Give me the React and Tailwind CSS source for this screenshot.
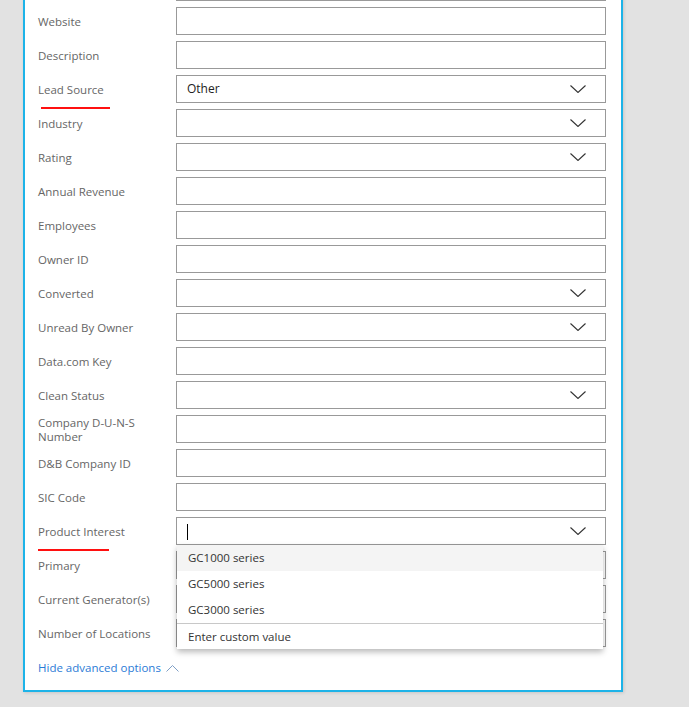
import { useState } from "react";

// fields in the advanced section of the lead form (first one is scrolled past the top)
const fields = [
  { id: "prev", label: "" },
  { id: "web", label: "Website" },
  { id: "desc", label: "Description" },
  { id: "src", label: "Lead Source", select: true, value: "Other", mark: "left-[3px] w-[69px]" },
  { id: "ind", label: "Industry", select: true },
  { id: "rat", label: "Rating", select: true },
  { id: "rev", label: "Annual Revenue" },
  { id: "emp", label: "Employees" },
  { id: "own", label: "Owner ID" },
  { id: "conv", label: "Converted", select: true },
  { id: "unr", label: "Unread By Owner", select: true },
  { id: "dck", label: "Data.com Key" },
  { id: "cln", label: "Clean Status", select: true },
  { id: "duns", label: "Company D-U-N-S Number" },
  { id: "dnb", label: "D&B Company ID" },
  { id: "sic", label: "SIC Code" },
  { id: "pi", label: "Product Interest", select: true, open: true, mark: "left-0 w-[71px]" },
  { id: "pri", label: "Primary" },
  { id: "gen", label: "Current Generator(s)" },
  { id: "loc", label: "Number of Locations" },
];

const options = ["GC1000 series", "GC5000 series", "GC3000 series"];

function Chevron() {
  return (
    <svg width="16" height="8" viewBox="0 0 16 8" className="shrink-0">
      <polyline points="0.5,0.5 8,7.5 15.5,0.5" fill="none" stroke="#333" strokeWidth="1.1" />
    </svg>
  );
}

function Dropdown() {
  const [hover] = useState(0);
  return (
    <div className="absolute top-[27px] left-0 right-[2px] z-10 bg-white shadow-[0_3px_6px_rgba(0,0,0,0.28)]">
      {options.map((o, i) => (
        <div
          key={o}
          className={`h-[26px] flex items-center pl-[11px] text-[11.5px] text-[#333] ${
            i === hover ? "bg-[#f4f4f4]" : ""
          }`}
        >
          {o}
        </div>
      ))}
      <div className="h-[26px] flex items-center pl-[11px] text-[11.5px] text-[#333] border-t border-[#c8c8c8]">
        Enter custom value
      </div>
    </div>
  );
}

function Row({ f }) {
  return (
    <div className="flex items-center h-[28px] mb-[6px]">
      <div className="relative w-[138px] shrink-0 pr-[14px] pt-[2px] text-[11.5px] leading-[14px] text-[#666]">
        {f.label}
        {f.mark && (
          <span className={`absolute top-[26px] h-[2px] bg-[#ff1010] ${f.mark}`} />
        )}
      </div>
      <div className="relative w-[430px] h-[28px] border border-[#999] bg-white flex items-center pl-[10px] pr-[19px] text-[12px] text-[#222]">
        <span className="flex-1">
          {f.open ? <span className="inline-block w-px h-[16px] bg-black align-middle" /> : f.value}
        </span>
        {f.select && <Chevron />}
        {f.open && <Dropdown />}
      </div>
    </div>
  );
}

export default function App() {
  return (
    <div
      className="w-[689px] h-[707px] overflow-hidden bg-[#e2e2e2]"
      style={{ fontFamily: '"Open Sans", "Noto Sans", sans-serif' }}
    >
      <div className="ml-[23px] mt-[-27px] w-[600px] bg-white border-x-2 border-b-2 border-[#1db3e8] pl-[13px] pr-[15px] pb-[14px] shadow-[1px_1px_3px_rgba(0,0,0,0.12)]">
        {fields.map((f) => (
          <Row key={f.id} f={f} />
        ))}
        <div className="flex items-center gap-[5px] mt-[13px] h-[16px] text-[11.5px] text-[#2b7bd6]">
          Hide advanced options
          <svg width="13" height="7" viewBox="0 0 13 7">
            <polyline points="0.5,6.5 6.5,0.5 12.5,6.5" fill="none" stroke="#7f9fc6" strokeWidth="1" />
          </svg>
        </div>
      </div>
    </div>
  );
}
